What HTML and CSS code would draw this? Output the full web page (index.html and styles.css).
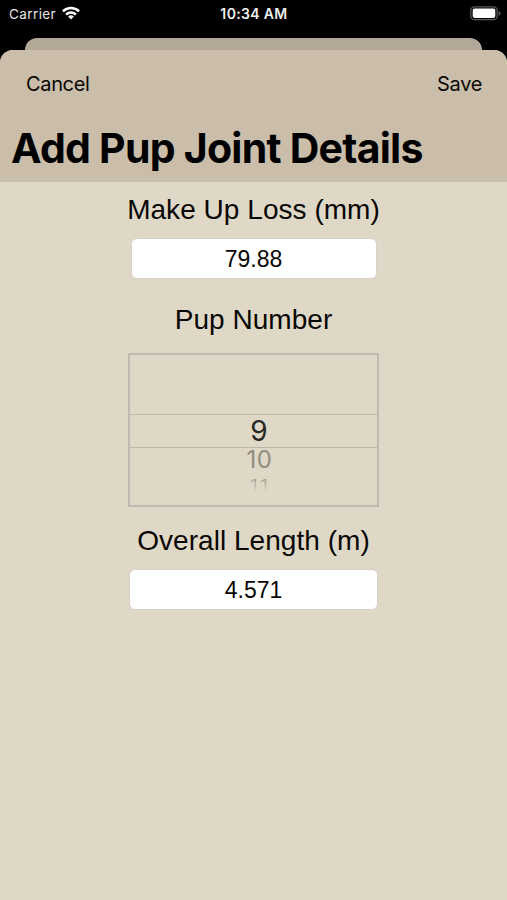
FILE: index.html
```html
<!DOCTYPE html>
<html lang="en">
<head>
<meta charset="utf-8">
<title>Add Pup Joint Details</title>
<link rel="stylesheet" href="styles.css">
</head>
<body>
<div class="status">
  <div class="carrier"><span>Carrier</span>
    <svg class="wifi" viewBox="0 0 18 14" width="18" height="14" fill="none" stroke="#fff" stroke-width="2.5"><path d="M.9 5.3C5.5.8 12.5.8 17.1 5.3M4.1 8.6C6.9 5.8 11.1 5.8 13.9 8.6"/><path d="M6.1 10.6Q9 8.1 11.9 10.6L9 13.6Z" fill="#fff" stroke="none"/></svg>
  </div>
  <time class="clock">10:34 AM</time>
  <svg class="battery" viewBox="0 0 31 15" width="31" height="15"><rect x=".8" y=".8" width="26.4" height="12.9" rx="3.6" fill="none" stroke="#58585a" stroke-width="1.3"/><rect x="2.7" y="2.6" width="22.6" height="9.3" rx="1.8" fill="#fff"/><path d="M28.6 5v4.8Q30.6 9 30.6 7.4T28.6 5Z" fill="#58585a"/></svg>
</div>
<div class="back-card"></div>
<main class="sheet">
  <header class="header">
    <nav class="bar"><a class="cancel">Cancel</a><a class="save">Save</a></nav>
    <h1 class="title">Add Pup Joint Details</h1>
  </header>
  <form class="form">
    <label class="label loss">Make Up Loss (mm)</label>
    <div class="field">79.88</div>
    <label class="label number">Pup Number</label>
    <div class="picker">
      <div class="selected">9</div>
      <div class="next">10</div>
      <div class="last">11</div>
    </div>
    <label class="label length">Overall Length (m)</label>
    <div class="field wide">4.571</div>
  </form>
</main>
</body>
</html>
```

FILE: styles.css
```css
* { box-sizing: border-box; }
body {
  margin: 0;
  width: 507px;
  height: 900px;
  overflow: hidden;
  display: flex;
  flex-direction: column;
  background: #000;
  color: #080704;
  font-family: Inter, "Liberation Sans", sans-serif;
}
.status {
  height: 38px;
  padding: 5px 6px 0 9px;
  display: grid;
  grid-template-columns: 1fr auto 1fr;
  align-items: start;
  color: #fff;
  font-size: 13.5px;
  line-height: 18px;
}
.carrier { display: flex; gap: 6px; color: #e4e4e4; letter-spacing: .4px; }
.wifi { margin-top: 1px; }
.clock { font-weight: 600; font-size: 14px; letter-spacing: .35px; margin-right: 2px; color: #eee; }
.battery { justify-self: end; margin-top: 1px; }
.back-card {
  height: 12px;
  margin: 0 25px;
  border-radius: 12px 12px 0 0;
  background: #b1a898;
}
.sheet {
  flex: 1;
  border-radius: 13px 13px 0 0;
  overflow: hidden;
  background: #dfd8c7;
}
.header { height: 132px; background: #cabeab; border-bottom: 1px solid #c8bdab; }
.bar {
  height: 68px;
  padding: 0 25px 0 26px;
  display: flex;
  justify-content: space-between;
  align-items: center;
  font-size: 20px;
  letter-spacing: -.35px;
}
.title {
  margin: 5px 0 0 11px;
  font-size: 41px;
  line-height: 50px;
  font-weight: 700;
  letter-spacing: -.75px;
  white-space: nowrap;
  color: #000;
}
.form {
  display: flex;
  flex-direction: column;
  align-items: center;
  font-family: "Liberation Sans", sans-serif;
}
.label { font-size: 28px; line-height: 32px; white-space: nowrap; letter-spacing: .04px; }
.loss { margin-top: 12px; }
.field {
  width: 246px;
  height: 41px;
  margin-top: 12px;
  border: 1px solid #d6d2ca;
  border-radius: 6px;
  background: #fff;
  text-align: center;
  font-size: 23px;
  line-height: 40px;
}
.number { margin-top: 25px; }
.picker {
  width: 251px;
  height: 154px;
  margin-top: 17px;
  padding-top: 59px;
  border: 2px solid #c0bab1;
  text-align: center;
  font-family: Inter, sans-serif;
}
.selected {
  height: 34px;
  padding-left: 11px;
  border-top: 1px solid #bdb7aa;
  border-bottom: 1px solid #bdb7aa;
  font-size: 28px;
  line-height: 32px;
  color: #292722;
}
.next { height: 26px; padding-left: 12px; font-size: 24px; line-height: 24px; letter-spacing: .6px; color: #928d81; }
.last {
  font-size: 20px;
  line-height: 22px;
  height: 22px;
  padding-left: 13px;
  letter-spacing: 2px;
  color: transparent;
  background: linear-gradient(#aaa497 20%, #d8d1c1 80%) text;
  transform: scaleY(.8);
}
.length { margin-top: 18px; }
.wide { width: 249px; }
```
